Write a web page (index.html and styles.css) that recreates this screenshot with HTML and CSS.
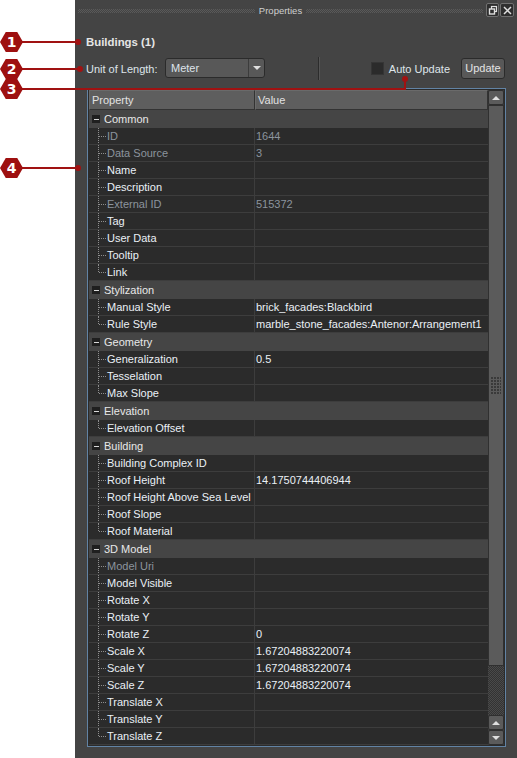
FILE: index.html
```html
<!DOCTYPE html>
<html>
<head>
<meta charset="utf-8">
<link rel="stylesheet" href="styles.css">
</head>
<body>
<div class="page">
  <div class="gutter"></div>
  <div class="panel">
    <div class="titlebar">
      <span class="grip"></span>
      <span class="title">Properties</span>
      <span class="grip"></span>
      <span class="tb-btn restore"><svg width="10" height="11" viewBox="0 0 10 11"><rect x="3.5" y="1.5" width="5" height="5" fill="none" stroke="#e0e0e0" stroke-width="1.2"/><rect x="1.5" y="4" width="5" height="5" fill="#2e2e2e" stroke="#e0e0e0" stroke-width="1.4"/></svg></span>
      <span class="tb-btn close"><svg width="11" height="11" viewBox="0 0 11 11"><path d="M2 2 L9 9 M9 2 L2 9" stroke="#e0e0e0" stroke-width="1.5"/></svg></span>
    </div>

    <div class="heading">Buildings (1)</div>

    <div class="toolbar">
      <span class="label">Unit of Length:</span>
      <div class="combo"><span class="combo-text">Meter</span><span class="combo-arrow"><span class="tri-down"></span></span></div>
      <span class="vsep"></span>
      <span class="check-wrap"><span class="checkbox"></span><span>Auto Update</span></span>
      <span class="btn">Update</span>
    </div>

    <div class="grid-frame">
      <div class="grid-main">
        <div class="grid-head"><div class="hcell">Property</div><div class="hcell">Value</div></div>
        <div class="grid-body">
          <div class="group"><span class="toggle"></span>Common</div>
          <div class="item dis"><div class="pcell">ID</div><div class="vcell">1644</div></div>
          <div class="item dis"><div class="pcell">Data Source</div><div class="vcell">3</div></div>
          <div class="item"><div class="pcell">Name</div><div class="vcell"></div></div>
          <div class="item"><div class="pcell">Description</div><div class="vcell"></div></div>
          <div class="item dis"><div class="pcell">External ID</div><div class="vcell">515372</div></div>
          <div class="item"><div class="pcell">Tag</div><div class="vcell"></div></div>
          <div class="item"><div class="pcell">User Data</div><div class="vcell"></div></div>
          <div class="item"><div class="pcell">Tooltip</div><div class="vcell"></div></div>
          <div class="item last"><div class="pcell">Link</div><div class="vcell"></div></div>

          <div class="group"><span class="toggle"></span>Stylization</div>
          <div class="item"><div class="pcell">Manual Style</div><div class="vcell">brick_facades:Blackbird</div></div>
          <div class="item last"><div class="pcell">Rule Style</div><div class="vcell">marble_stone_facades:Antenor:Arrangement1</div></div>

          <div class="group"><span class="toggle"></span>Geometry</div>
          <div class="item"><div class="pcell">Generalization</div><div class="vcell">0.5</div></div>
          <div class="item"><div class="pcell">Tesselation</div><div class="vcell"></div></div>
          <div class="item last"><div class="pcell">Max Slope</div><div class="vcell"></div></div>

          <div class="group"><span class="toggle"></span>Elevation</div>
          <div class="item last"><div class="pcell">Elevation Offset</div><div class="vcell"></div></div>

          <div class="group"><span class="toggle"></span>Building</div>
          <div class="item"><div class="pcell">Building Complex ID</div><div class="vcell"></div></div>
          <div class="item"><div class="pcell">Roof Height</div><div class="vcell">14.1750744406944</div></div>
          <div class="item"><div class="pcell">Roof Height Above Sea Level</div><div class="vcell"></div></div>
          <div class="item"><div class="pcell">Roof Slope</div><div class="vcell"></div></div>
          <div class="item last"><div class="pcell">Roof Material</div><div class="vcell"></div></div>

          <div class="group"><span class="toggle"></span>3D Model</div>
          <div class="item dis"><div class="pcell">Model Uri</div><div class="vcell"></div></div>
          <div class="item"><div class="pcell">Model Visible</div><div class="vcell"></div></div>
          <div class="item"><div class="pcell">Rotate X</div><div class="vcell"></div></div>
          <div class="item"><div class="pcell">Rotate Y</div><div class="vcell"></div></div>
          <div class="item"><div class="pcell">Rotate Z</div><div class="vcell">0</div></div>
          <div class="item"><div class="pcell">Scale X</div><div class="vcell">1.67204883220074</div></div>
          <div class="item"><div class="pcell">Scale Y</div><div class="vcell">1.67204883220074</div></div>
          <div class="item"><div class="pcell">Scale Z</div><div class="vcell">1.67204883220074</div></div>
          <div class="item"><div class="pcell">Translate X</div><div class="vcell"></div></div>
          <div class="item"><div class="pcell">Translate Y</div><div class="vcell"></div></div>
          <div class="item last"><div class="pcell">Translate Z</div><div class="vcell"></div></div>
        </div>
      </div>
      <div class="vscroll">
        <div class="sb-btn"><span class="tri-up"></span></div>
        <div class="sb-thumb"><span class="sb-grip"></span></div>
        <div class="sb-track"></div>
        <div class="sb-btn"><span class="tri-up"></span></div>
        <div class="sb-btn"><span class="tri-down"></span></div>
      </div>
    </div>
  </div>

  <div class="callout c1"><span class="hex">1</span><span class="cline"></span><span class="dot"></span></div>
  <div class="callout c2"><span class="hex">2</span><span class="cline"></span><span class="dot"></span></div>
  <div class="callout c3"><span class="hex">3</span><span class="cline"></span></div>
  <div class="c3-up"><span class="dot"></span></div>
  <div class="callout c4"><span class="hex">4</span><span class="cline"></span><span class="dot"></span></div>
</div>
</body>
</html>
```

FILE: styles.css
```css
html, body {
  margin: 0;
  padding: 0;
  background: #ffffff;
}

body {
  font-family: "Liberation Sans", Arial, sans-serif;
  font-size: 11px;
  color: #e2e6ea;
}

.page {
  position: relative;
  display: flex;
  width: 517px;
  height: 758px;
  overflow: hidden;
}

.gutter {
  width: 75px;
  flex: none;
  background: #ffffff;
}

.panel {
  width: 442px;
  flex: none;
  background: #444444;
  display: flex;
  flex-direction: column;
}

/* title bar */
.titlebar {
  height: 20px;
  display: flex;
  align-items: center;
  padding: 0 3px 0 3px;
}

.grip {
  flex: 1;
  height: 4px;
  margin-top: 1px;
  background: repeating-conic-gradient(#5a5a5a 0 25%, transparent 0 50%) 0 0 / 2px 2px;
}

.title {
  color: #cfcfcf;
  font-size: 9.5px;
  margin: 0 4px;
}

.tb-btn {
  width: 11px;
  height: 12px;
  border: 1px solid #707070;
  border-radius: 2px;
  background: #2e2e2e;
  margin-left: 1px;
  display: flex;
  align-items: center;
  justify-content: center;
}

.tb-btn.restore {
  margin-left: 3px;
}

.tb-btn.close {
  width: 12px;
}

/* heading */
.heading {
  margin: 13px 0 0 11px;
  height: 18px;
  line-height: 18px;
  font-weight: bold;
  font-size: 11.4px;
  color: #e6e6e6;
}

/* toolbar */
.toolbar {
  margin-top: 6px;
  height: 23px;
  display: flex;
  align-items: center;
  padding: 0 12px 0 11px;
  color: #dfe4ea;
}

.label {
  width: 79px;
}

.combo {
  width: 100px;
  height: 20px;
  box-sizing: border-box;
  border: 1px solid #2b2b2b;
  border-radius: 3px;
  background: #585858;
  display: flex;
  margin-top: -2px;
}

.combo-text {
  flex: 1;
  padding-left: 5px;
  line-height: 18px;
}

.combo-arrow {
  width: 15px;
  border-left: 1px solid #3c3c3c;
  display: flex;
  align-items: center;
  justify-content: center;
}

.tri-down {
  width: 0;
  height: 0;
  border-left: 4px solid transparent;
  border-right: 4px solid transparent;
  border-top: 4px solid #e0e0e0;
}

.tri-up {
  width: 0;
  height: 0;
  border-left: 4px solid transparent;
  border-right: 4px solid transparent;
  border-bottom: 4px solid #e0e0e0;
}

.vsep {
  width: 0;
  height: 23px;
  margin-left: 53px;
  border-left: 1px solid #2c2c2c;
  border-right: 1px solid #555555;
}

.check-wrap {
  margin-left: auto;
  display: flex;
  align-items: center;
  gap: 5px;
}

.checkbox {
  width: 13px;
  height: 13px;
  box-sizing: border-box;
  background: #2b2b2b;
  border: 1px solid #353535;
}

.btn {
  margin-left: 11px;
  width: 44px;
  height: 21px;
  box-sizing: border-box;
  border: 1px solid #2b2b2b;
  border-radius: 3px;
  background: #585858;
  color: #e4e4e4;
  text-align: center;
  line-height: 19px;
}

/* property grid */
.grid-frame {
  margin: 8px 11px 0 12px;
  border: 1px solid #6283a4;
  padding: 1px;
  background: #2b2b2b;
  display: flex;
  height: 655px;
}

.grid-main {
  flex: 1;
  display: flex;
  flex-direction: column;
  overflow: hidden;
}

.grid-head {
  display: grid;
  grid-template-columns: 166px 1fr;
  height: 20px;
  flex: none;
}

.hcell {
  background: #5e5e5e;
  border: 1px solid #333333;
  border-left-color: #6a6a6a;
  border-top-color: #6a6a6a;
  line-height: 18px;
  padding-left: 2px;
  color: #e2e2e2;
}

.grid-body {
  flex: 1;
  overflow: hidden;
}

.group {
  height: 18px;
  display: flex;
  align-items: center;
  background: #454545;
  color: #e8e8e8;
}

.toggle {
  position: relative;
  width: 8px;
  height: 8px;
  margin: 0 4px 0 3px;
  background: #1f1f1f;
}

.toggle::after {
  content: "";
  position: absolute;
  left: 2px;
  top: 4px;
  width: 5px;
  height: 1px;
  background: #d8d8d8;
}

.item {
  display: grid;
  grid-template-columns: 166px 1fr;
  height: 17px;
  box-sizing: border-box;
  border-bottom: 1px solid #3d3d3d;
  background: #2b2b2b;
  color: #eaf0f6;
}

.item.dis {
  color: #8c949d;
}

.pcell {
  position: relative;
  border-right: 1px solid #3d3d3d;
  padding-left: 18px;
  line-height: 16px;
  white-space: nowrap;
  overflow: hidden;
}

.pcell::before {
  content: "";
  position: absolute;
  left: 9px;
  top: 0;
  bottom: -1px;
  border-left: 1px dotted #8e8e8e;
}

.item.last .pcell::before {
  bottom: 8px;
}

.pcell::after {
  content: "";
  position: absolute;
  left: 10px;
  top: 8px;
  width: 7px;
  border-top: 1px dotted #8e8e8e;
}

.vcell {
  padding-left: 1px;
  line-height: 16px;
  white-space: nowrap;
}

/* scrollbar */
.vscroll {
  width: 16px;
  flex: none;
  display: flex;
  flex-direction: column;
  background: #3b3b3b;
}

.sb-btn {
  height: 15px;
  box-sizing: border-box;
  background: #5b5b5b;
  border: 1px solid #2f2f2f;
  border-radius: 2px;
  display: flex;
  align-items: center;
  justify-content: center;
}

.sb-thumb {
  height: 561px;
  box-sizing: border-box;
  background: #5b5b5b;
  border: 1px solid #303030;
  display: flex;
  align-items: center;
  justify-content: center;
}

.sb-grip {
  width: 10px;
  height: 18px;
  background: radial-gradient(circle at 1px 1px, #3a3a3a 0.9px, transparent 1px) 0 0 / 3px 3px;
}

.sb-track {
  flex: 1;
  background: repeating-conic-gradient(#333333 0 25%, #4a4a4a 0 50%) 0 0 / 2px 2px;
}

/* annotation callouts */
.callout {
  position: absolute;
  left: 0;
  height: 20px;
  display: flex;
  align-items: center;
}

.c1 { top: 32px; }
.c2 { top: 59px; }
.c3 { top: 79px; }
.c4 { top: 158px; }

.hex {
  width: 23px;
  height: 20px;
  background: #9e1010;
  clip-path: polygon(25% 0, 75% 0, 100% 50%, 75% 100%, 25% 100%, 0 50%);
  color: #ffffff;
  font-family: "DejaVu Sans", sans-serif;
  font-weight: bold;
  font-size: 14px;
  line-height: 20px;
  text-align: center;
}

.cline {
  height: 2px;
  background: #a01212;
  margin-left: -1px;
}

.c1 .cline { width: 56px; }
.c2 .cline { width: 58px; }
.c3 .cline { width: 384px; }
.c4 .cline { width: 56px; }

.dot {
  width: 6px;
  height: 6px;
  border-radius: 50%;
  background: #a01212;
  margin-left: -3px;
}

.c3-up {
  position: absolute;
  left: 404px;
  top: 79px;
  width: 2px;
  height: 11px;
  background: #a01212;
}

.c3-up .dot {
  position: absolute;
  left: -2px;
  top: -3px;
  margin: 0;
}
```
